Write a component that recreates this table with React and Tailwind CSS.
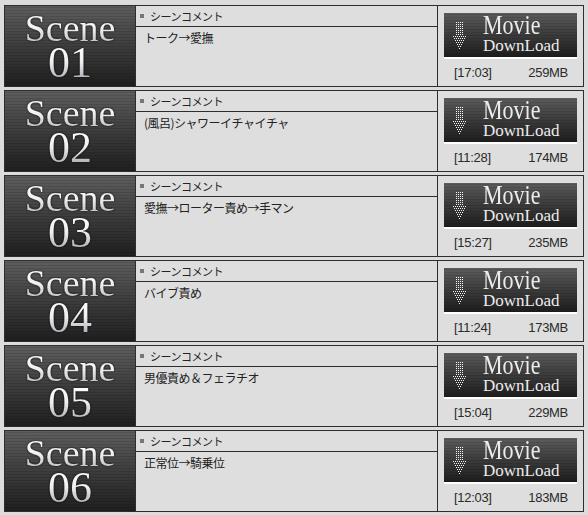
const scenes = [
  { no: "01", comment: "トーク→愛撫", time: "17:03", size: "259MB" },
  { no: "02", comment: "(風呂)シャワーイチャイチャ", time: "11:28", size: "174MB" },
  { no: "03", comment: "愛撫→ローター責め→手マン", time: "15:27", size: "235MB" },
  { no: "04", comment: "バイブ責め", time: "11:24", size: "173MB" },
  { no: "05", comment: "男優責め＆フェラチオ", time: "15:04", size: "229MB" },
  { no: "06", comment: "正常位→騎乗位", time: "12:03", size: "183MB" },
];

function DotArrow() {
  const dots = [];
  // shaft
  for (let y = 0; y < 14; y += 2) {
    for (let x = 3; x <= 9; x += 2) dots.push([x, y]);
  }
  // head
  const rows = [
    [0, 12],
    [1, 11],
    [2, 10],
    [3, 9],
    [4, 8],
    [5, 7],
    [6, 6],
  ];
  rows.forEach(([a, b], i) => {
    for (let x = a; x <= b; x += 2) dots.push([x, 14 + i * 2]);
  });
  return (
    <svg width="13" height="28" viewBox="0 0 13 28" className="shrink-0">
      {dots.map(([x, y], i) => (
        <rect key={i} x={x} y={y} width="1" height="1" fill="#f4f4f4" />
      ))}
    </svg>
  );
}

function SceneRow({ scene }) {
  return (
    <div className="flex h-[82px] w-[580px] border border-[#2e2e2e] bg-[#dedede]">
      <div className="flex w-[130px] shrink-0 flex-col items-center bg-[image:repeating-linear-gradient(0deg,rgba(0,0,0,0.12)_0px,rgba(0,0,0,0.12)_1px,transparent_1px,transparent_3px),linear-gradient(#5e5e5e,#3a3a3a_55%,#1f1f1f)] pt-[5px] font-['Liberation_Serif',serif]">
        <span className="bg-gradient-to-b from-white via-[#f2f2f2] to-[#b9b9b9] bg-clip-text text-[38px] leading-[34px] text-transparent [filter:drop-shadow(0_0_1px_rgba(0,0,0,0.8))]">
          Scene
        </span>
        <span className="bg-gradient-to-b from-white via-[#eeeeee] to-[#a9a9b4] bg-clip-text text-[44px] leading-[35px] text-transparent [filter:drop-shadow(0_0_1px_rgba(0,0,0,0.8))]">
          {scene.no}
        </span>
      </div>
      <div className="flex flex-1 flex-col border-l border-[#2e2e2e] font-['Noto_Sans_CJK_JP',sans-serif] text-[11px] text-[#222]">
        <div className="flex h-[21px] items-center gap-[6px] border-b border-[#2e2e2e] pl-[4px]">
          <span className="h-[4px] w-[4px] bg-[#777]" />
          <span className="tracking-[-0.5px]">シーンコメント</span>
        </div>
        <div className="pl-[8px] pt-[2px] text-[12px] tracking-[-0.5px]">{scene.comment}</div>
      </div>
      <div className="flex w-[146px] shrink-0 flex-col border-l border-[#2e2e2e] pl-[6px] pt-[7px]">
        <div className="flex h-[46px] w-[133px] items-center gap-[17px] border-b-2 border-white bg-[image:repeating-linear-gradient(0deg,rgba(0,0,0,0.1)_0px,rgba(0,0,0,0.1)_1px,transparent_1px,transparent_3px),linear-gradient(#5c5c5c,#3b3b3b_50%,#1d1d1d)] pl-[9px] pt-[2px]">
          <DotArrow />
          <div className="flex flex-col font-['Liberation_Serif',serif] text-[#ececec]">
            <span className="origin-bottom scale-y-[1.25] text-[22px] leading-[20px]">Movie</span>
            <span className="text-[17px] leading-[16px]">DownLoad</span>
          </div>
        </div>
        <div className="flex w-[133px] justify-between pl-[10px] pr-[9px] pt-[4px] font-['Liberation_Sans',sans-serif] text-[13px] tracking-[-0.3px] text-[#2a2a2a]">
          <span>[{scene.time}]</span>
          <span>{scene.size}</span>
        </div>
      </div>
    </div>
  );
}

export default function App() {
  return (
    <div className="min-h-[515px] w-[588px] bg-[#dcdcdc] pl-[4px] pt-[5px]">
      <div className="flex flex-col gap-[3px]">
        {scenes.map((s) => (
          <SceneRow key={s.no} scene={s} />
        ))}
      </div>
    </div>
  );
}
